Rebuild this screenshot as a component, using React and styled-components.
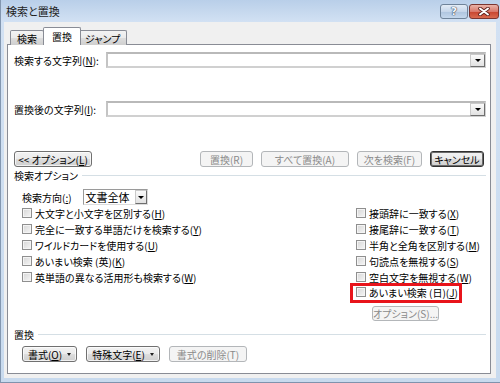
import React from 'react'
import styled, { createGlobalStyle, css } from 'styled-components'

const GlobalStyle = createGlobalStyle`
  html, body {
    margin: 0;
    padding: 0;
    background: #ffffff;
  }
  body {
    font-family: "Noto Sans CJK JP", "Noto Sans", sans-serif;
    font-size: 10px;
    font-feature-settings: "palt";
    color: #000;
  }
  * {
    box-sizing: border-box;
  }
  u {
    text-underline-offset: 1px;
  }
`

const leftOptions = [
  { label: '大文字と小文字を区別する', key: 'H' },
  { label: '完全に一致する単語だけを検索する', key: 'Y' },
  { label: 'ワイルドカードを使用する', key: 'U' },
  { label: 'あいまい検索 (英)', key: 'K' },
  { label: '英単語の異なる活用形も検索する', key: 'W' },
]

const rightOptions = [
  { label: '接頭辞に一致する', key: 'X' },
  { label: '接尾辞に一致する', key: 'T' },
  { label: '半角と全角を区別する', key: 'M' },
  { label: '句読点を無視する', key: 'S' },
  { label: '空白文字を無視する', key: 'W' },
]

function CheckOption({ label, hotkey }) {
  return (
    <CheckRow>
      <CheckBox />
      <span>{label}(<u>{hotkey}</u>)</span>
    </CheckRow>
  )
}

function CloseIcon() {
  return (
    <svg width="14" height="9" viewBox="0 0 14 9">
      <path d="M3 1.5 L11 7.5 M11 1.5 L3 7.5" stroke="#5a1d1a" strokeWidth="3.6" strokeLinecap="round" />
      <path d="M3 1.5 L11 7.5 M11 1.5 L3 7.5" stroke="#ffffff" strokeWidth="2" strokeLinecap="round" />
    </svg>
  )
}

export default function App() {
  return (
    <>
      <GlobalStyle />
      <Window>
        <TitleBar>
          <Title>検索と置換</Title>
          <Caption>
            <HelpButton>?</HelpButton>
            <CloseButton><CloseIcon /></CloseButton>
          </Caption>
        </TitleBar>

        <Client>
          <TabStrip>
            <Tab>検索</Tab>
            <Tab $active>置換</Tab>
            <Tab>ジャンプ</Tab>
          </TabStrip>

          <Panel>
            <FieldRow>
              <span>検索する文字列(<u>N</u>):</span>
              <Combo><DropButton><Arrow /></DropButton></Combo>
            </FieldRow>
            <FieldRow $top={33}>
              <span>置換後の文字列(<u>I</u>):</span>
              <Combo><DropButton><Arrow /></DropButton></Combo>
            </FieldRow>

            <ButtonRow>
              <Button $w={78}><span>&lt;&lt; オプション(<u>L</u>)</span></Button>
              <ActionGroup>
                <Button $w={53} disabled>置換(R)</Button>
                <Button $w={88} disabled>すべて置換(A)</Button>
                <Button $w={65} disabled>次を検索(F)</Button>
                <Button $w={54} $default>キャンセル</Button>
              </ActionGroup>
            </ButtonRow>

            <GroupHeader $top={1}>検索オプション</GroupHeader>
            <GroupBody>
              <DirectionRow>
                <span>検索方向(<u>:</u>)</span>
                <Select>
                  文書全体
                  <SelectButton><Arrow /></SelectButton>
                </Select>
              </DirectionRow>
              <Columns>
                <Column>
                  {leftOptions.map(o => (
                    <CheckOption key={o.label} label={o.label} hotkey={o.key} />
                  ))}
                </Column>
                <RightColumn>
                  {rightOptions.map(o => (
                    <CheckOption key={o.label} label={o.label} hotkey={o.key} />
                  ))}
                  <Highlight>
                    <CheckOption label="あいまい検索 (日)" hotkey="J" />
                  </Highlight>
                  <SmallButton disabled>オプション(S)...</SmallButton>
                </RightColumn>
              </Columns>
            </GroupBody>

            <GroupHeader $top={6}>置換</GroupHeader>
            <BottomRow>
              <Button $w={55}><span>書式(<u>O</u>)</span><Caret /></Button>
              <Button $w={74}><span>特殊文字(<u>E</u>)</span><Caret /></Button>
              <Button $w={78} disabled>書式の削除(T)</Button>
            </BottomRow>
          </Panel>
        </Client>
      </Window>
    </>
  )
}

const Window = styled.div`
  width: 500px;
  height: 383px;
  display: flex;
  flex-direction: column;
  background: linear-gradient(#b9cfe9, #d2e1f3 22px, #c8daee);
  border-left: 1px solid #8397b0;
  border-bottom: 1px solid #7f93ad;
`

const TitleBar = styled.div`
  height: 22px;
  flex: none;
  display: flex;
  justify-content: space-between;
  padding: 0 1px 0 5px;
`

const Title = styled.div`
  font-size: 11px;
  line-height: 22px;
  color: #1e1e1e;
`

const Caption = styled.div`
  display: flex;
  gap: 1px;
  margin-top: 4px;
`

const captionBase = css`
  height: 15px;
  border-radius: 3px;
  display: flex;
  align-items: center;
  justify-content: center;
`

const HelpButton = styled.div`
  ${captionBase};
  width: 28px;
  border: 1px solid #6f8399;
  background: linear-gradient(#e3ecf6, #c6d6ea 50%, #aec4de 51%, #c4d7ec);
  color: #f4f7fb;
  font-family: "DejaVu Sans", sans-serif;
  font-weight: bold;
  font-size: 11px;
  text-shadow: 0 0 1px #3c4a5c, 0 0 1px #3c4a5c, 0 0 1px #3c4a5c;
`

const CloseButton = styled.div`
  ${captionBase};
  width: 30px;
  border: 1px solid #7b3530;
  background: linear-gradient(#eab3a8, #d9796b 50%, #c7442f 51%, #d96a4f);
`

const Client = styled.div`
  flex: 1;
  display: flex;
  flex-direction: column;
  margin: 0 4px 4px 3px;
  background: #f0f0f0;
  padding: 5px 5px 4px 3px;
`

const TabStrip = styled.div`
  display: flex;
  align-items: flex-start;
  height: 18px;
  margin-bottom: -1px;
  padding-left: 3px;
`

const Tab = styled.div`
  position: relative;
  height: 15px;
  margin-top: 3px;
  padding: 0 6px;
  display: flex;
  align-items: center;
  border: 1px solid #898c95;
  border-bottom: none;
  border-radius: 2px 2px 0 0;
  background: linear-gradient(#f3f3f3, #ebebeb 50%, #dddddd 51%, #cfcfcf);
  & + & {
    margin-left: -1px;
  }
  ${p => p.$active && css`
    z-index: 1;
    height: 18px;
    margin-top: 0;
    margin-left: -2px;
    margin-right: -2px;
    padding: 0 8px;
    background: #ffffff;
  `}
`

const Panel = styled.div`
  flex: 1;
  display: flex;
  flex-direction: column;
  background: #ffffff;
  border: 1px solid #898c95;
  padding: 7px 4px 0 6px;
`

const FieldRow = styled.div`
  display: grid;
  grid-template-columns: 92px 1fr;
  align-items: center;
  height: 16px;
  margin-top: ${p => p.$top || 0}px;
  white-space: nowrap;
`

const Combo = styled.div`
  height: 16px;
  display: flex;
  justify-content: flex-end;
  align-items: center;
  background: #ffffff;
  border: 2px solid #d0d0d0;
  border-top-color: #b9b9b9;
  border-left-color: #c4c4c4;
`

const DropButton = styled.div`
  width: 15px;
  height: 13px;
  margin-right: -1px;
  display: flex;
  align-items: center;
  justify-content: center;
  border: 1px solid #6e6e6e;
  border-top-color: #c9c9c9;
  border-left-color: #c9c9c9;
  background: linear-gradient(#fafafa, #e2e2e2);
`

const Arrow = styled.span`
  width: 0;
  height: 0;
  margin-top: 1px;
  border-left: 3px solid transparent;
  border-right: 3px solid transparent;
  border-top: 3px solid #000;
`

const ButtonRow = styled.div`
  display: flex;
  align-items: center;
  margin-top: 34px;
`

const ActionGroup = styled.div`
  display: flex;
  gap: 8px;
  margin-left: auto;
  margin-right: 2px;
`

const Button = styled.button`
  width: ${p => p.$w}px;
  height: 16px;
  padding: 0;
  display: inline-flex;
  align-items: center;
  justify-content: center;
  font: inherit;
  font-size: 10px;
  white-space: nowrap;
  color: #000;
  border: 1px solid #707070;
  border-radius: 3px;
  background: linear-gradient(#f2f2f2, #ebebeb 50%, #dddddd 51%, #cfcfcf);
  box-shadow: inset 0 0 0 1px rgba(255, 255, 255, 0.7);
  ${p => p.$default && css`
    border-color: #303030;
    box-shadow: inset 0 0 0 1px #6a6a6a;
  `}
  &:disabled {
    color: #8a8a8a;
    border-color: #b3b6b9;
    background: #f4f4f4;
    box-shadow: none;
  }
`

const SmallButton = styled(Button)`
  width: 67px;
  height: 15px;
  margin: 3px 0 0 16px;
`

const Caret = styled.span`
  width: 0;
  height: 0;
  margin-left: 5px;
  border-left: 2.5px solid transparent;
  border-right: 2.5px solid transparent;
  border-top: 3px solid #202020;
`

const GroupHeader = styled.div`
  display: flex;
  align-items: center;
  gap: 4px;
  height: 14px;
  margin-top: ${p => p.$top}px;
  &::after {
    content: '';
    flex: 1;
    height: 1px;
    background: #d5dfe5;
  }
`

const GroupBody = styled.div`
  padding-left: 8px;
`

const DirectionRow = styled.div`
  display: flex;
  align-items: center;
  gap: 11px;
  height: 16px;
  margin-top: 7px;
`

const Select = styled.div`
  width: 65px;
  height: 16px;
  display: flex;
  align-items: center;
  justify-content: space-between;
  padding-left: 2px;
  font-size: 11px;
  border: 1px solid #9a9a9a;
  border-right-color: #dcdcdc;
  border-bottom-color: #dcdcdc;
  background: #ffffff;
`

const SelectButton = styled.div`
  width: 12px;
  height: 14px;
  display: flex;
  align-items: center;
  justify-content: center;
  border: 1px solid #6e6e6e;
  border-top-color: #c9c9c9;
  border-left-color: #c9c9c9;
  background: linear-gradient(#fafafa, #e2e2e2);
`

const Columns = styled.div`
  display: flex;
`

const Column = styled.div`
  flex: 1;
  display: flex;
  flex-direction: column;
`

const RightColumn = styled.div`
  width: 130px;
  display: flex;
  flex-direction: column;
  align-items: flex-start;
`

const CheckRow = styled.label`
  display: flex;
  align-items: center;
  gap: 3px;
  height: 16px;
  white-space: nowrap;
`

const CheckBox = styled.span`
  width: 10px;
  height: 10px;
  flex: none;
  border: 1px solid #8f8f8f;
  background: linear-gradient(135deg, #d6d6d6, #f6f6f6);
  box-shadow: inset 0 0 0 1px #f4f4f4;
`

const Highlight = styled.div`
  margin: -2px 0 0 -6px;
  padding: 0 1px 0 3px;
  border: 3px solid #e8141b;
  & > label {
    margin-top: -2px;
  }
`

const BottomRow = styled.div`
  display: flex;
  gap: 9px;
  padding-left: 8px;
  margin-top: 5px;
`
